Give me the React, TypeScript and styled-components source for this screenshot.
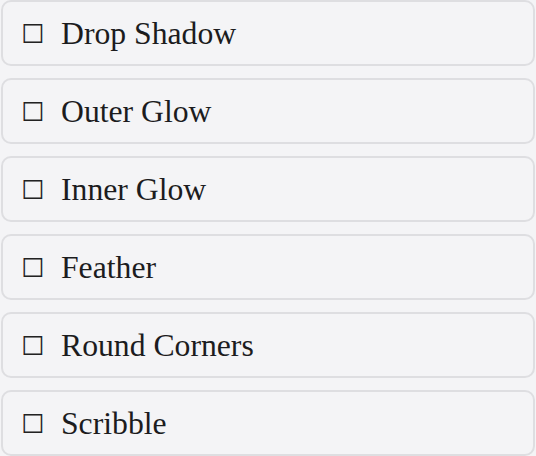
import React from 'react'
import styled, { createGlobalStyle } from 'styled-components'

const Global = createGlobalStyle`
  html, body {
    margin: 0;
    padding: 0;
    background: #f4f4f6;
  }
`

const List = styled.div`
  display: flex;
  flex-direction: column;
  gap: 12px;
  padding: 0 1px;
`

const Row = styled.div`
  display: flex;
  align-items: center;
  height: 66px;
  box-sizing: border-box;
  padding-left: 18px;
  border: 2px solid #dedee1;
  border-radius: 10px;
  background: #f4f4f6;
  font-family: 'Liberation Serif', 'Times New Roman', serif;
  font-size: 31.7px;
  color: #1c1c1e;
`

const Box = styled.span`
  font-family: 'DejaVu Sans', sans-serif;
  font-size: 26px;
  line-height: 1;
  width: 40px;
  color: #222;
  flex-shrink: 0;
  position: relative;
  top: 1px;
`

const Name = styled.span`
  line-height: 1;
  position: relative;
  top: 1px;
`

const effects = ['Drop Shadow', 'Outer Glow', 'Inner Glow', 'Feather', 'Round Corners', 'Scribble']

const App = () => {
  return (
    <>
      <Global />
      <List>
        {effects.map((name) => (
          <Row key={name}>
            <Box>☐</Box>
            <Name>{name}</Name>
          </Row>
        ))}
      </List>
    </>
  )
}

export default App
